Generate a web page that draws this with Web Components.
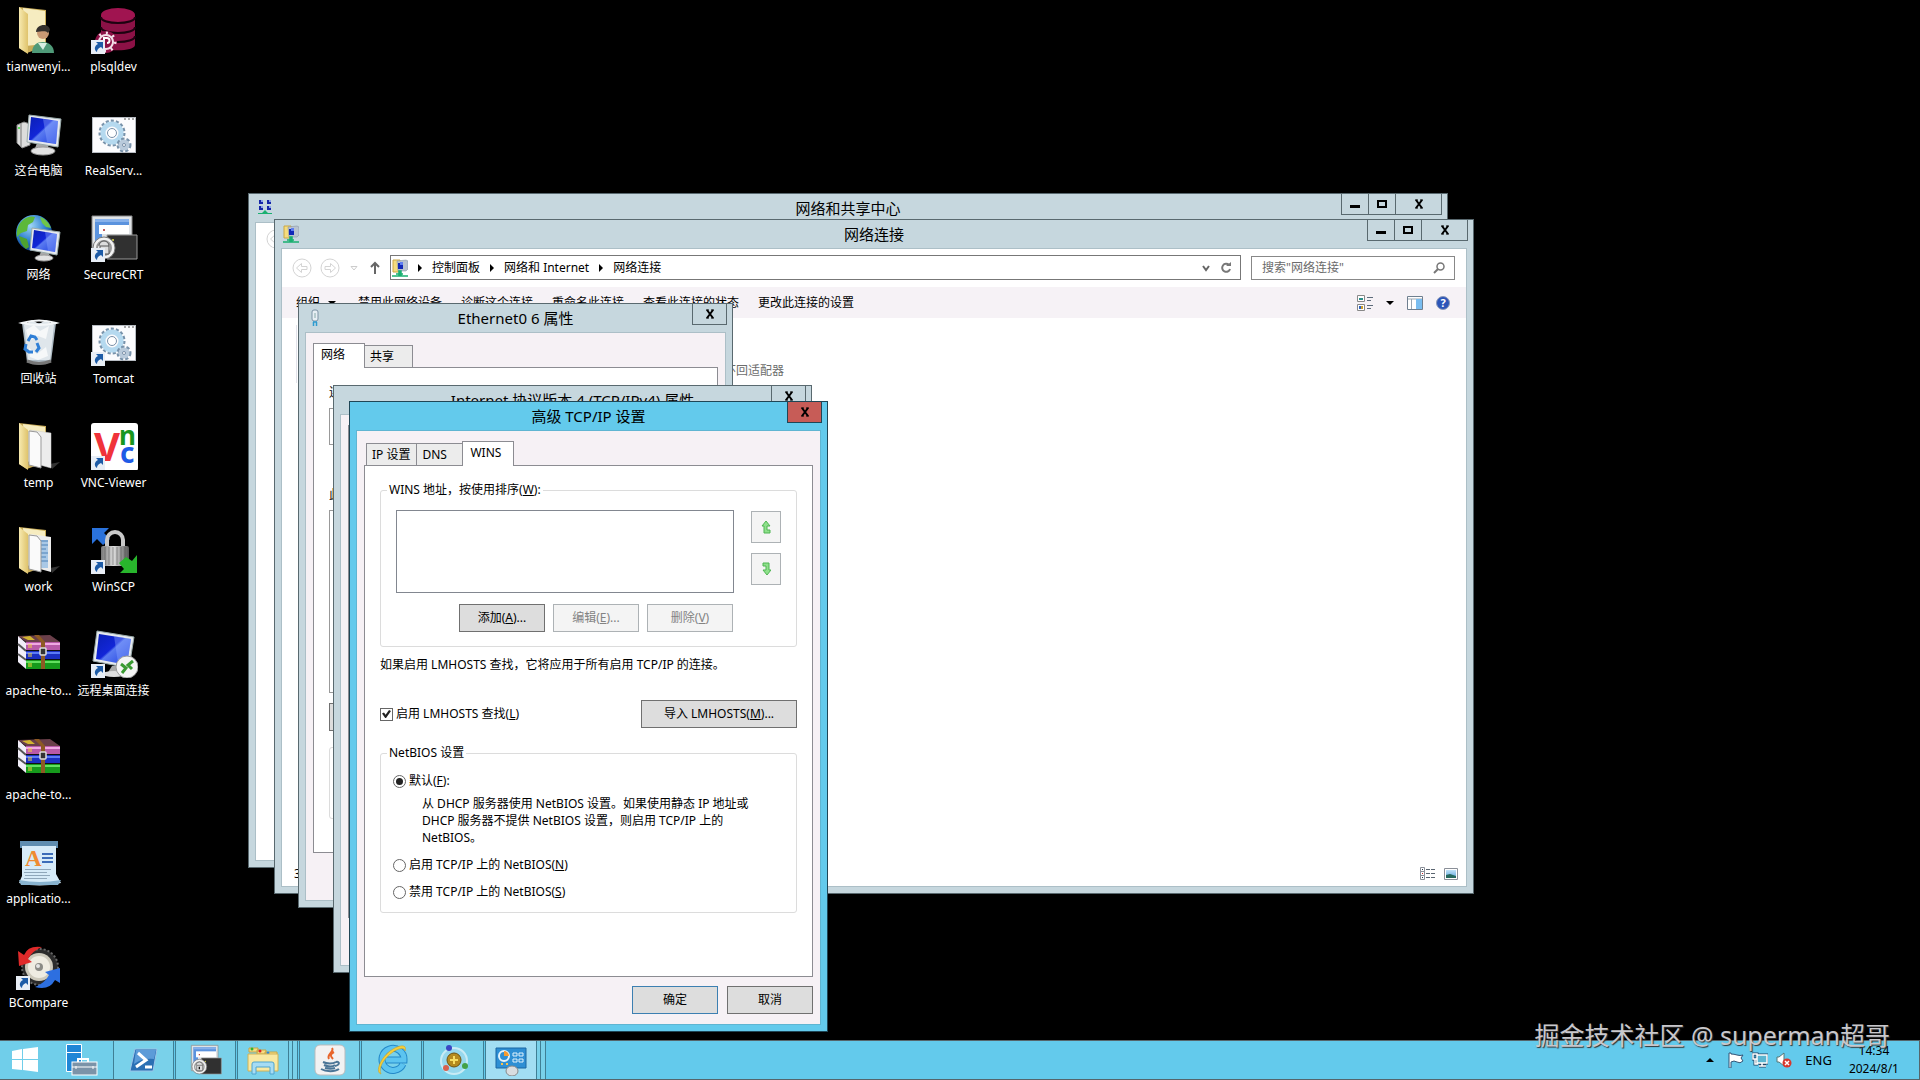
<!DOCTYPE html>
<html lang="zh-CN">
<head>
<meta charset="utf-8">
<title>网络连接</title>
<style>
  html, body { height: 100%; }
  body {
    margin: 0;
    overflow: hidden;
    background: #000;
    color: #000;
    font: 12px/16px "Noto Sans", "Noto Sans CJK SC", sans-serif;
  }
  desk-top { height: 100%; }

  /* windows sit freely on the desktop */
  #sharing { left: 248px; top: 193px; width: 1200px; height: 675px; }
  #connections { left: 274px; top: 219px; width: 1200px; height: 675px; }
  #ethernet { left: 298px; top: 303px; width: 435px; height: 605px; }
  #ipv4 { left: 333px; top: 385px; width: 479px; height: 588px; }
  #advanced { left: 349px; top: 401px; width: 479px; height: 631px; }
</style>
</head>
<body>
<desk-top>
  <desk-icon slot="icons" icon="user" label="tianwenyi..."></desk-icon>
  <desk-icon slot="icons" icon="computer" label="这台电脑"></desk-icon>
  <desk-icon slot="icons" icon="network" label="网络"></desk-icon>
  <desk-icon slot="icons" icon="bin" label="回收站"></desk-icon>
  <desk-icon slot="icons" icon="folder" label="temp"></desk-icon>
  <desk-icon slot="icons" icon="folderdoc" label="work"></desk-icon>
  <desk-icon slot="icons" icon="rar" label="apache-to..."></desk-icon>
  <desk-icon slot="icons" icon="rar" label="apache-to..."></desk-icon>
  <desk-icon slot="icons" icon="wordpad" label="applicatio..."></desk-icon>
  <desk-icon slot="icons" icon="bcompare" label="BCompare" shortcut></desk-icon>
  <desk-icon slot="icons" icon="database" label="plsqldev" shortcut></desk-icon>
  <desk-icon slot="icons" icon="gears" label="RealServ..."></desk-icon>
  <desk-icon slot="icons" icon="securecrt" label="SecureCRT" shortcut></desk-icon>
  <desk-icon slot="icons" icon="gears" label="Tomcat" shortcut></desk-icon>
  <desk-icon slot="icons" icon="vnc" label="VNC-Viewer" shortcut></desk-icon>
  <desk-icon slot="icons" icon="winscp" label="WinSCP" shortcut></desk-icon>
  <desk-icon slot="icons" icon="remote" label="远程桌面连接" shortcut></desk-icon>

  <app-window id="sharing" heading="网络和共享中心" icon="sharing" controls="full">
    <explorer-view bare></explorer-view>
  </app-window>

  <app-window id="connections" heading="网络连接" icon="connections" controls="full">
    <explorer-view></explorer-view>
  </app-window>

  <app-window id="ethernet" heading="Ethernet0 6 属性" icon="adapter" tone="dialog">
    <tab-pages tabs="网络,共享" active="0">
      <adapter-page></adapter-page>
    </tab-pages>
  </app-window>

  <app-window id="ipv4" heading="Internet 协议版本 4 (TCP/IPv4) 属性" tone="dialog">
    <tab-pages tabs="" active="0"></tab-pages>
  </app-window>

  <app-window id="advanced" heading="高级 TCP/IP 设置" tone="dialog" active>
    <tab-pages tabs="IP 设置,DNS,WINS" active="2">
      <wins-page></wins-page>
      <push-button slot="footer" primary>确定</push-button>
      <push-button slot="footer">取消</push-button>
    </tab-pages>
  </app-window>

  <task-bar slot="taskbar">
    <task-button icon="powershell" label="PowerShell"></task-button>
    <task-button icon="securecrt" label="SecureCRT"></task-button>
    <task-button icon="explorer" label="文件资源管理器" stacked></task-button>
    <task-button icon="java" label="Java"></task-button>
    <task-button icon="ie" label="Internet Explorer"></task-button>
    <task-button icon="molecule" label="Tools"></task-button>
    <task-button icon="panel" label="控制面板" active></task-button>
  </task-bar>
</desk-top>

<script>
const DEFS = `
<defs>
  <linearGradient id="screen" x1="0" y1="0" x2="1" y2="1">
    <stop offset="0" stop-color="#0a1fb4"/><stop offset=".45" stop-color="#1226d8"/>
    <stop offset=".5" stop-color="#5a7bf0"/><stop offset="1" stop-color="#1b3ce0"/>
  </linearGradient>
  <linearGradient id="paper" x1="0" y1="0" x2="1" y2="0">
    <stop offset="0" stop-color="#f7eab0"/><stop offset="1" stop-color="#dfc36c"/>
  </linearGradient>
  <linearGradient id="steel" x1="0" y1="0" x2="1" y2="0">
    <stop offset="0" stop-color="#777"/><stop offset=".45" stop-color="#ddd"/><stop offset="1" stop-color="#555"/>
  </linearGradient>
  <radialGradient id="globe" cx=".4" cy=".3" r=".7">
    <stop offset="0" stop-color="#9fd6f7"/><stop offset=".6" stop-color="#2f80cf"/><stop offset="1" stop-color="#0e3f8c"/>
  </radialGradient>
  <linearGradient id="sky" x1="0" y1="0" x2="0" y2="1">
    <stop offset="0" stop-color="#bfe3fa"/><stop offset="1" stop-color="#5fa5dc"/>
  </linearGradient>
</defs>`;

const FOLDER = `
  <path d="M4 1L31 4V40L12 47L4 42Z" fill="#c9ac58"/>
  <path d="M8 2L30 5V38L10 40Z" fill="#f6ecc0"/>
  <path d="M4 1L13 8V48L4 42Z" fill="url(#paper)"/>`;

const CRT = `
  <path d="M2 2H42V40H2Z" fill="#dfe3e6" stroke="#888"/>
  <path d="M5 5H39V12H12V30H5Z" fill="#5b93de"/>
  <path d="M9 11H39V20H9Z" fill="#fff"/><path d="M5 5H39V8H5Z" fill="#87b1ea"/>
  <circle cx="14" cy="16" r="1" fill="#a22"/>
  <path d="M17 21H47V45H17Z" fill="#303030" stroke="#999"/>
  <circle cx="23" cy="26" r="1" fill="#e5e24a"/>
  <circle cx="14" cy="34" r="11" fill="#f2f2f2" stroke="#777"/>
  <circle cx="14" cy="34" r="7" fill="none" stroke="#999" stroke-width="2"/>
  <path d="M9 32a5 5 0 0 1 10 0M10 32h9v8h-9z" fill="#ddd" stroke="#555"/>
  <path d="M14 34v4" stroke="#111" stroke-width="2"/>`;

// toothed wheel built from a dashed ring
const cog = (x, y, r, fill) => `
  <circle cx="${x}" cy="${y}" r="${r + 1}" fill="none" stroke="#7892aa" stroke-width="3" stroke-dasharray="3 2"/>
  <circle cx="${x}" cy="${y}" r="${r - 2}" fill="none" stroke="${fill}" stroke-width="5"/>
  <circle cx="${x}" cy="${y}" r="${r / 2 - 1}" fill="#fff" stroke="#7a90a8"/>`;

const NET_FOLDER = `
  <path d="M1 1h7v12H1z" fill="#f5dc7d" stroke="#c9a646"/>
  <path d="M5 2l9-1 2 1v8l-2 2H6z" fill="#b9c3cf" stroke="#7f8b98" stroke-width=".5"/>
  <path d="M6 4h5v6H6z" fill="#1028b8"/><path d="M8 3h3v3H8z" fill="#5f7ef0"/>
  <path d="M0 17h16M4 15h7M7 12h2v4H7z" stroke="#19b070" stroke-width="1.5" fill="#19b070"/>`;

const ICONS = {
  user: ["0 0 48 48", `${FOLDER}
    <path d="M17 47c0-8 5-11 11-11s11 4 11 11z" fill="#4f9a78"/><path d="M23 37l5 7 4-7" fill="#d8eee2"/>
    <circle cx="28" cy="27" r="6" fill="#c99a74"/><path d="M21 26c0-8 13-10 14-2l-2 3c-3-3-7-1-12-1z" fill="#33302c"/>`],
  computer: ["0 0 48 48", `
    <path d="M2 15L9 12L15 14V35L7 38L2 33Z" fill="#dcdcdc" stroke="#888"/><path d="M6 14V37" stroke="#777"/>
    <circle cx="4" cy="18" r="1" fill="#3d3"/>
    <path d="M22 33h10l3 8H19z" fill="#aaa"/><ellipse cx="28" cy="41" rx="12" ry="4" fill="#e2e2e2" stroke="#999"/>
    <path d="M14 5L46 9L43 37L12 32Z" fill="#e6e9ee" stroke="#9aa"/><path d="M16 7L43 11L41 34L14 30Z" fill="url(#screen)"/>
    <path d="M28 9L43 11L41 34L32 32Z" fill="#8eaaff" opacity=".4"/>`],
  network: ["0 0 48 48", `
    <circle cx="19" cy="19" r="18" fill="url(#globe)"/>
    <path d="M7 7c5-5 10-5 13-4l-2 5-5 3-1 6-6 2-4 4c-1-6 1-12 5-16z" fill="#5cb83a"/>
    <path d="M25 3c6 2 9 6 11 11l-5-1-4-4z" fill="#6fc546"/><path d="M4 22l8 3 2 8-3 2c-4-3-6-8-7-13z" fill="#4da22f"/>
    <path d="M26 38h7l3 6H23z" fill="#aaa"/><ellipse cx="29" cy="44" rx="9" ry="3" fill="#e2e2e2" stroke="#999"/>
    <path d="M17 14L45 18L42 41L15 36Z" fill="#e6e9ee" stroke="#9aa"/><path d="M19 16L42 20L40 38L17 34Z" fill="url(#screen)"/>
    <path d="M30 18L42 20L40 38L33 37Z" fill="#8eaaff" opacity=".4"/>`],
  bin: ["0 0 48 48", `
    <path d="M7 5L41 5L36 44Q24 49 12 44Z" fill="#aebbc4"/><path d="M9 7L17 2L24 6L31 2L39 7L35 42L13 42Z" fill="#dfe6eb"/>
    <path d="M11 12l8-5 6 6 9-5-3 13-8-3-9 5zM14 30l8 6 9-7 2 9-10 4-8-3z" fill="#fff" opacity=".7"/>
    <path d="M7 5Q24 0 41 5Q24 9 7 5Z" fill="none" stroke="#f3f6f8" stroke-width="2"/>
    <path d="M13 23l3-5 4 1 2 3M11 26l-1 5 4 3 4 0M22 25l2 5-3 4" fill="none" stroke="#2f7fd6" stroke-width="3"/>
    <path d="M12 43Q24 48 36 43" fill="none" stroke="#777" stroke-width="3"/>`],
  folder: ["0 0 48 48", `<path d="M35 42l10-2-8 7z" fill="#333"/>${FOLDER}
    <path d="M15 8L36 11V46L25 43V14Z" fill="#ececec" stroke="#ccc" stroke-width=".5"/>
    <path d="M14 9L22 10L26 15V46L14 43Z" fill="#fafafa" stroke="#999"/>`],
  folderdoc: ["0 0 48 48", `<path d="M35 42l10-2-8 7z" fill="#333"/>${FOLDER}
    <path d="M15 8L36 11V46L25 43V14Z" fill="#ececec"/>
    <path d="M26 14h7v28h-7z" fill="#a9c8e6"/><path d="M26 15h7M26 19h7M26 23h5M26 27h7M26 31h5M26 35h7" stroke="#4c82b8"/>
    <path d="M14 9L22 10L26 15V46L14 43Z" fill="#fafafa" stroke="#999"/>`],
  rar: ["0 0 48 48", `
    <path d="M3 6L35 5L45 12H11Z" fill="#6a3f4a"/><path d="M7 7L15 6L20 10H13Z" fill="#d2b431"/>
    <path d="M3 6L11 13V39L3 32Z" fill="#f1eef8"/><path d="M3 14L11 21M3 24L11 30" stroke="#555" stroke-width="2"/>
    <path d="M11 12H45V20H11Z" fill="#b95aa8"/><path d="M11 13H45V15H11Z" fill="#f0a8e2"/>
    <path d="M11 21H45V29H11Z" fill="#1b2fc0"/><path d="M11 22H45V24H11Z" fill="#5c7bf5"/>
    <path d="M11 30H45V39H11Z" fill="#169a1c"/><path d="M11 31H45V33H11Z" fill="#62e060"/>
    <path d="M11 20.5H45M11 29.5H45" stroke="#111"/>
    <path d="M14 14v4M16 14v4M14 23v4M16 23v4M14 33v4M16 33v4" stroke="#f4d53a"/>
    <path d="M19 5L26 12V39H30V12L24 5Z" fill="#8d5a24"/>
    <rect x="25" y="18" width="6" height="7" rx="1" fill="#333" stroke="#ddd" stroke-width="1.5"/>`],
  wordpad: ["0 0 48 48", `
    <path d="M5 3H43V10H5Z" fill="#5f8db0"/><path d="M7 8H41V36L46 45Q24 50 4 45L7 38Z" fill="#d6ebf8"/>
    <path d="M4 42Q24 46 46 42L43 47H6Z" fill="#88b3cf"/>
    <text x="10" y="28" font-family="Liberation Serif" font-weight="bold" font-size="23" fill="#ef8b32">A</text>
    <path d="M27 16H38M27 20H38M27 24H38" stroke="#3b6cb8" stroke-width="2"/>
    <path d="M10 31.5H36M9 34.5H32M10 37.5H35M9 40.5H32" stroke="#8fa7ba"/>`],
  bcompare: ["0 0 48 48", `
    <circle cx="25" cy="25" r="18" fill="#2b2b2b" stroke="#666" stroke-width="2" stroke-dasharray="2 2"/>
    <circle cx="24" cy="25" r="14" fill="#cdc9bb"/><circle cx="24" cy="25" r="11" fill="#efece2"/>
    <circle cx="24" cy="25" r="4" fill="#8b8b86"/><circle cx="23" cy="24" r="2" fill="#e5e5e5"/>
    <path d="M27 5Q13 3 9 13L3 9L4 24L17 20L13 17Q17 9 27 5Z" fill="#e02a2a"/>
    <path d="M20 45Q34 49 40 38L45 41V26L30 30L34 33Q30 41 20 45Z" fill="#2d6fe0"/>`],
  database: ["0 0 48 48", `
    <path d="M11 9V39C11 46 45 46 45 39V9Z" fill="#8c1146"/><ellipse cx="28" cy="9" rx="17" ry="7" fill="#a01450"/>
    <path d="M11 11c0 8 34 8 34 0M11 21c0 8 34 8 34 0M11 30c0 8 34 8 34 0" fill="none" stroke="#1d0210" stroke-width="2"/>
    <circle cx="16" cy="36" r="11" fill="#8c1146"/>
    <circle cx="16" cy="36" r="9" fill="none" stroke="#f3dfe8" stroke-width="3" stroke-dasharray="2 5"/>
    <circle cx="16" cy="36" r="7" fill="none" stroke="#f3dfe8" stroke-width="2"/>
    <path d="M14 40v-8h3a2 2 0 0 1 0 5" fill="none" stroke="#fff" stroke-width="2"/>`],
  gears: ["0 0 48 48", `
    <rect x="2.5" y="7.5" width="43" height="35" fill="#fbfbfd" stroke="#b7bcc2"/>
    <path d="M34 9h2M38 9h2M42 9h2" stroke="#555"/>${cog(22, 23, 11, "#b5d9ef")}${cog(34, 35, 5, "#b9cadb")}`],
  securecrt: ["0 0 48 48", CRT],
  vnc: ["0 0 48 48", `
    <rect x="1" y="1" width="47" height="48" rx="3" fill="#fff"/>
    <g font-family="Noto Sans" font-weight="bold"><text x="4" y="39" font-size="40" fill="#f0333a">V</text>
    <text x="29" y="23" font-size="26" fill="#18961e">n</text><text x="30" y="41" font-size="28" fill="#1f5be6">c</text></g>`],
  winscp: ["0 0 48 48", `
    <path d="M2 2H19L14 7L20 13L13 19L7 13L2 18Z" fill="#2a72dc"/>
    <path d="M17 22V14a8 8 0 0 1 16 0v8" fill="none" stroke="#c9c9c9" stroke-width="4"/>
    <rect x="11" y="20" width="28" height="20" rx="2" fill="url(#steel)"/>
    <path d="M15 21v18M19 21v18M23 21v18M27 21v18M31 21v18M35 21v18" stroke="#444" opacity=".5"/>
    <path d="M47 29V47H30L34 43L29 37L36 31L42 35Z" fill="#28b52c"/>`],
  remote: ["0 0 48 48", `
    <path d="M22 36h9l3 8H17z" fill="#aaa"/><ellipse cx="24" cy="44" rx="12" ry="3" fill="#ddd"/>
    <path d="M7 1L44 7L39 38L3 31Z" fill="#e6e9ee" stroke="#9aa"/><path d="M9 4L41 9L37 35L6 29Z" fill="url(#screen)"/>
    <path d="M24 6L41 9L37 35L28 33Z" fill="#8eaaff" opacity=".4"/>
    <circle cx="37" cy="37" r="11" fill="#f4f4f4" stroke="#999"/>
    <path d="M31 34l5 4-4 5M43 31l-5 4 4 4" fill="none" stroke="#3a9a32" stroke-width="3"/>`],
  shortcut: ["0 0 14 14", `<path d="M0 0h14v14H0z" fill="#e8eef6"/>
    <path d="M12 2v7L10 7C7 8 6 10 6 12C3 10 3 6 7 4L5 2Z" fill="#1d5ba6"/>`],

  sharing: ["0 0 16 16", `<path d="M2 1h4v4H2zM10 1h4v4h-4zM2 7h4v4H2zM10 7h4v4h-4z" fill="#1526a8"/>
    <path d="M4 1h2v2H4zM12 1h2v2h-2zM4 7h2v2H4zM12 7h2v2h-2z" fill="#8ba2e8"/>
    <path d="M8 11l3 3h4v1H1v-1h4z" fill="#19b070"/>`],
  connections: ["0 0 16 18", NET_FOLDER],
  adapter: ["0 0 16 18", `<rect x="5" y="1" width="6" height="11" rx="2" fill="#e7eef4" stroke="#7d93a5"/>
    <path d="M8 4v5" stroke="#8aa"/><path d="M6 13h4M6.5 13v4M9.5 13v4" stroke="#2e9bd0" stroke-width="1.5"/>`],
  back: ["0 0 20 20", `<g fill="none" stroke="#d4d4d4"><circle cx="10" cy="10" r="9"/><path d="M4.5 10l5-4.500v3h5.500v3h-5.500v3z"/></g>`],
  forward: ["0 0 20 20", `<g fill="none" stroke="#d4d4d4"><circle cx="10" cy="10" r="9"/><path d="M15.5 10l-5-4.500v3h-5.500v3h5.500v3z"/></g>`],
  recent: ["0 0 12 20", `<path d="M3 8.500h6L6 12z" fill="none" stroke="#ccc"/>`],
  up: ["0 0 14 20", `<path d="M7 16V5M3 9l4-4 4 4" fill="none" stroke="#666" stroke-width="2"/>`],
  crumb: ["0 0 6 10", `<path d="M1 1l4 4-4 4z"/>`],
  caret: ["0 0 8 6", `<path d="M0 1h8L4 5z"/>`],
  chevron: ["0 0 10 10", `<path d="M2 3l3 4 3-4" fill="none" stroke="#666" stroke-width="2"/>`],
  refresh: ["0 0 12 12", `<path d="M9 3a4 4 0 1 0 1 4" fill="none" stroke="#777" stroke-width="2"/><path d="M6 4h5V0z" fill="#777"/>`],
  search: ["0 0 12 12", `<circle cx="7.5" cy="4.5" r="3.5" fill="none" stroke="#777" stroke-width="1.5"/><path d="M5 7L1 11" stroke="#777" stroke-width="2"/>`],
  views: ["0 0 16 16", `<path d="M.5.5h7v6h-7zM.5 9.500h7v6h-7z" fill="#fff" stroke="#888"/>
    <path d="M2 3h4v2H2z" fill="#2b8f8a"/><path d="M2 11h2v3H2z" fill="#2f62c0"/><path d="M4 11h2v3H4z" fill="#d0a026"/>
    <path d="M10 2.500h6M10 5.500h4M10 10.500h6M10 13.500h4" stroke="#5d6b7a"/>`],
  pane: ["0 0 16 16", `<path d="M.5 1.500h15v13H.5z" fill="#fff" stroke="#6f7f8f"/><path d="M1 4h14M4.500 4v10" stroke="#9aa7b3"/><path d="M9 4h6v10H9z" fill="#79bdf0"/>`],
  help: ["0 0 14 14", `<circle cx="7" cy="7" r="6.5" fill="#2c55b8" stroke="#8a99b8"/>
    <text x="7" y="11" text-anchor="middle" font-family="Noto Sans" font-weight="bold" font-size="11" fill="#fff">?</text>`],
  details: ["0 0 16 14", `<path d="M.5.5h4v4h-4zM.5 4.500h4v4h-4zM.5 8.500h4v4h-4z" fill="#fff" stroke="#8a8f98"/>
    <path d="M2 2.500h1M2 10.500h1" stroke="#234"/><path d="M2 6.500h1" stroke="#c22"/>
    <path d="M6 2.500h4M11 2.500h4M6 6.500h4M11 6.500h4M6 10.500h4M11 10.500h4" stroke="#5a6570"/>`],
  thumbs: ["0 0 14 12", `<path d="M.5.5h13v11H.5z" fill="#fff" stroke="#8a8f98"/><path d="M2 2h10v8H2z" fill="url(#sky)"/><path d="M2 7l4-1 6 2v2H2z" fill="#25695e"/>`],
  minimize: ["0 0 12 12", `<path d="M1 7h10v3H1z"/>`],
  maximize: ["0 0 12 12", `<path d="M2 3h8v6H2z" fill="none" stroke="#000" stroke-width="2"/>`],
  close: ["0 0 12 12", `<path d="M2 2h3M7 2h3M2 10h3M7 10h3" stroke="#000"/><path d="M3 2l6 8M9 2L3 10" stroke="#000" stroke-width="2"/>`],
  raise: ["0 0 10 14", `<path d="M5 1L9 6H6V10H9V13H3V6H1Z" fill="#8fe08b" stroke="#4fb552"/>`],
  lower: ["0 0 10 14", `<path d="M6 13L2 8H5V4H2V1H8V8H10Z" fill="#8fe08b" stroke="#4fb552"/>`],

  start: ["0 0 28 28", `<path d="M1 5L11 3V13H1ZM12 3L27 1V13H12ZM1 14H11V24L1 23ZM12 14H27V26L12 24Z" fill="#fff"/>`],
  server: ["0 0 32 32", `<path d="M.5.5h15v8h-15zM.5 8.500h15v19h-15z" fill="#1f86d6" stroke="#fff"/>
    <path d="M12 18v-3h10v3" fill="none" stroke="#fff" stroke-width="2"/>
    <rect x="6" y="18" width="25" height="13" fill="#7b93a8" stroke="#fff"/><path d="M6 23h25M10 22v3M27 22v3" stroke="#fff"/>`],
  powershell: ["0 0 32 32", `<path d="M7 5H29L25 27H2Z" fill="#2b70b4" stroke="#9bc4e8"/><path d="M8 6H28L26 15Q14 14 6 20Z" fill="#5c9bd8"/>
    <path d="M10 9l8 7-10 7M17 23h7" fill="none" stroke="#fff" stroke-width="3"/>`],
  explorer: ["0 0 32 32", `<path d="M2 4h9v4H2zM10 6h9v4h-9zM18 8h12v4H18z" fill="#f5dc83" stroke="#c7a545"/>
    <circle cx="5" cy="5" r="1.5" fill="#2fb52f"/><circle cx="13" cy="7" r="1.5" fill="#d22"/><circle cx="21" cy="9" r="1.5" fill="#2a86d8"/>
    <path d="M1 10H31V27H1Z" fill="#f9e9a2" stroke="#d0b257"/>
    <path d="M5 30V20Q5 18 7 18H25Q27 18 27 20V30H23V23H9V30Z" fill="#a6dcf4" stroke="#4fa5cf"/>`],
  java: ["0 0 32 32", `<rect x="1" y="1" width="30" height="30" rx="5" fill="#f2f2f2" stroke="#bbb"/>
    <path d="M18 4c3 4-6 6-3 11M20 8c-4 2-4 4-1 7" fill="none" stroke="#e8652a" stroke-width="2"/>
    <path d="M9 18c4 2 10 2 13 0M10 21c4 2 9 2 11 0M22 18c4-1 4 3-1 4M7 25c5 3 14 3 18 0M11 24c4 1 7 1 10 0" fill="none" stroke="#4b7596" stroke-width="2"/>`],
  ie: ["0 0 32 32", `<path d="M27 20A11 11 0 1 1 28 16H10" fill="none" stroke="#2489c9" stroke-width="7"/>
    <path d="M27 20A11 11 0 1 1 28 16H10" fill="none" stroke="#5cc4f0" stroke-width="5"/>
    <path d="M5 30C-2 28 6 11 17 5C26 0 31 1 29 7C29 3 23 4 17 8C8 14 2 24 5 30Z" fill="#f4cf3b" stroke="#c99b1e" stroke-width=".5"/>`],
  molecule: ["0 0 32 32", `<circle cx="16" cy="17" r="13" fill="#a5dcef" opacity=".7" stroke="#eaf7fb" stroke-width="2"/>
    <circle cx="16" cy="16" r="7" fill="#b58a1e" stroke="#6e5310"/><path d="M16 12v8M12 16h8" stroke="#f7dd62" stroke-width="2"/>
    <circle cx="11" cy="4" r="3" fill="#3a48c4"/><circle cx="8" cy="24" r="3" fill="#d8604e"/><circle cx="27" cy="22" r="3" fill="#43a147"/>`],
  panel: ["0 0 32 32", `<path d="M1 4H31V24H1Z" fill="#2e8fd4" stroke="#1b66a2"/>
    <circle cx="9" cy="12" r="5" fill="none" stroke="#e3f3fc" stroke-width="2"/><path d="M9 7a5 5 0 0 1 5 5H9z" fill="#f49b31"/>
    <path d="M18 9h4v3h-4zM24 9h4v3h-4zM18 15h4v3h-4zM24 15h4v3h-4z" fill="none" stroke="#dff2fc"/>
    <path d="M6 20h2M11 20h2" stroke="#f7c04b" stroke-width="2"/>
    <ellipse cx="17" cy="27" rx="6" ry="5" fill="#d9dde0" stroke="#888"/>`],

  trayup: ["0 0 8 6", `<path d="M0 5h8L4 1z"/>`],
  flag: ["0 0 16 16", `<path d="M1 1V16H3V10Q6 8 9 10T15 9L13 6L15 3Q12 4 9 3T3 2V1Z" fill="#fff" stroke="#357"/>`],
  wired: ["0 0 16 16", `<path d="M5 3H15V11H5ZM7 14H14M10 11V14M1 2H5V7H1ZM3 7V12H6" fill="none" stroke="#246" stroke-width="3"/>
    <path d="M5 3H15V11H5Z" fill="#5bb5d0"/>
    <path d="M5 3H15V11H5ZM7 14H14M10 11V14M1 2H5V7H1ZM3 7V12H6" fill="none" stroke="#fff" stroke-width="1.5"/>`],
  muted: ["0 0 16 16", `<path d="M1 5H3L8 1V14L3 10H1Z" fill="#fff" stroke="#577"/><circle cx="11" cy="11" r="4.5" fill="#d8362c"/><path d="M9 9l4 4M13 9l-4 4" stroke="#fff" stroke-width="1.5"/>`],
};

class UiIcon extends HTMLElement {
  constructor() {
    super();
    this.attachShadow({ mode: "open" });
  }

  connectedCallback() {
    const [box, shapes] = ICONS[this.getAttribute("name")];
    const size = box.split(" ");
    const width = this.getAttribute("size") || size[2];
    const height = this.getAttribute("size") || size[3];
    this.shadowRoot.innerHTML = `
      <style>
        :host { display: block; flex: none; }
        svg { display: block; }
      </style>
      <svg viewBox="${box}" width="${width}" height="${height}" aria-hidden="true">${DEFS}${shapes}</svg>
    `;
  }
}

class DeskTop extends HTMLElement {
  constructor() {
    super();
    this.attachShadow({ mode: "open" });
    this.shadowRoot.innerHTML = `
      <style>
        :host { display: flex; flex-direction: column; position: relative; overflow: hidden; }
        .icons {
          flex: 1;
          min-height: 0;
          display: grid;
          grid-auto-flow: column;
          grid-template-rows: repeat(auto-fill, 104px);
          grid-auto-columns: 75px;
          padding-left: 1px;
        }
        .mark {
          position: absolute;
          right: 30px;
          bottom: 27px;
          color: #c9c8cc;
          font-size: 25px;
          line-height: 36px;
          text-shadow: 1px 1px 1px #333;
          pointer-events: none;
          white-space: nowrap;
        }
      </style>
      <div class="icons"><slot name="icons"></slot></div>
      <slot></slot>
      <slot name="taskbar"></slot>
      <div class="mark">掘金技术社区 @ superman超哥</div>
    `;
  }
}

class DeskIcon extends HTMLElement {
  constructor() {
    super();
    this.attachShadow({ mode: "open" });
  }

  connectedCallback() {
    this.shadowRoot.innerHTML = `
      <style>
        :host { display: block; color: #fff; }
        a {
          display: flex;
          flex-direction: column;
          align-items: center;
          gap: 5px;
          padding-top: 6px;
          color: inherit;
          text-decoration: none;
          white-space: nowrap;
        }
        .art { position: relative; }
        .badge { position: absolute; left: 1px; bottom: 0; }
      </style>
      <a href="#">
        <span class="art">
          <ui-icon name="${this.getAttribute("icon")}"></ui-icon>
          ${this.hasAttribute("shortcut") ? `<ui-icon class="badge" name="shortcut"></ui-icon>` : ""}
        </span>
        <span>${this.getAttribute("label")}</span>
      </a>
    `;
  }
}

class AppWindow extends HTMLElement {
  constructor() {
    super();
    this.attachShadow({ mode: "open" });
  }

  connectedCallback() {
    const icon = this.getAttribute("icon");
    const full = this.getAttribute("controls") === "full";
    this.shadowRoot.innerHTML = `
      <style>
        :host {
          --frame: #c6d7de;
          --line: #59696f;
          --client: #fff;
          position: absolute;
          isolation: isolate;
          box-sizing: border-box;
          display: flex;
          flex-direction: column;
          padding: 0 7px 7px;
          border: 1px solid var(--line);
          background: var(--frame);
        }
        :host([tone="dialog"]) { --client: #f6f1f5; }
        :host([active]) { --frame: #63caec; --line: #1f4656; }
        header { position: relative; height: 29px; display: flex; justify-content: center; flex: none; }
        h1 { margin: 0; font-size: 15px; font-weight: normal; line-height: 28px; white-space: nowrap; }
        .icon { position: absolute; left: 1px; top: 5px; }
        .controls { position: absolute; right: -2px; top: -1px; display: flex; }
        button {
          display: grid;
          place-items: center;
          box-sizing: border-box;
          width: 28px;
          height: 22px;
          margin: 0 0 0 -1px;
          padding: 0;
          border: 1px solid var(--line);
          background: none;
        }
        .close { width: 35px; }
        .full .close { width: 47px; }
        :host([active]) .close { background: #c75c57; }
        .client {
          flex: 1;
          min-height: 0;
          display: flex;
          flex-direction: column;
          background: var(--client);
          box-shadow: 0 0 0 1px rgba(80, 110, 120, .22);
        }
        ::slotted(*) { flex: 1; min-height: 0; }
      </style>
      <header>
        ${icon ? `<ui-icon class="icon" name="${icon}"></ui-icon>` : ""}
        <h1>${this.getAttribute("heading")}</h1>
        <div class="controls ${full ? "full" : ""}">
          ${full ? `
          <button aria-label="最小化"><ui-icon name="minimize"></ui-icon></button>
          <button aria-label="最大化"><ui-icon name="maximize"></ui-icon></button>` : ""}
          <button class="close" aria-label="关闭"><ui-icon name="close"></ui-icon></button>
        </div>
      </header>
      <div class="client"><slot></slot></div>
    `;
  }
}

class ExplorerView extends HTMLElement {
  constructor() {
    super();
    this.attachShadow({ mode: "open" });
  }

  connectedCallback() {
    const style = `
      <style>
        :host { display: flex; flex-direction: column; }
        button { padding: 0; border: 0; background: none; font: inherit; color: inherit; white-space: nowrap; }
        nav { display: flex; align-items: center; gap: 8px; padding: 6px 11px 7px 10px; }
        .address {
          flex: 1;
          display: flex;
          align-items: center;
          gap: 9px;
          height: 23px;
          margin-right: 2px;
          padding: 0 8px 0 1px;
          border: 1px solid #777;
          white-space: nowrap;
        }
        .address a { color: inherit; text-decoration: none; }
        .space { flex: 1; }
        .search { display: flex; align-items: center; width: 202px; height: 22px; border: 1px solid #888; }
        .search ui-icon { padding-right: 9px; }
        input {
          flex: 1;
          min-width: 0;
          padding: 0 0 0 10px;
          border: 0;
          outline: 0;
          background: none;
          font: inherit;
        }
        input::placeholder { color: #6b6b6b; opacity: 1; }
        .commands {
          display: flex;
          align-items: center;
          gap: 19px;
          height: 31px;
          padding: 0 16px 0 14px;
          background: #f6f2f6;
        }
        .menu { display: flex; align-items: center; gap: 8px; padding-right: 3px; }
        .tools { display: flex; align-items: center; gap: 13px; margin-left: auto; }
        .files { flex: 1; padding: 7px 14px; }
        .item {
          box-sizing: border-box;
          width: 488px;
          height: 58px;
          padding: 38px 0 0;
          border-left: 1px solid #e2e2ea;
          color: #6d6d6d;
          text-align: right;
        }
        footer { display: flex; align-items: center; justify-content: space-between; padding: 0 8px 4px 12px; }
        footer div { display: flex; gap: 8px; align-items: center; }
      </style>
    `;
    if (this.hasAttribute("bare")) {
      this.shadowRoot.innerHTML = `${style}
        <nav><button aria-label="后退"><ui-icon name="back"></ui-icon></button></nav>
      `;
      return;
    }
    this.shadowRoot.innerHTML = `${style}
      <nav>
        <button aria-label="后退"><ui-icon name="back"></ui-icon></button>
        <button aria-label="前进"><ui-icon name="forward"></ui-icon></button>
        <button aria-label="最近"><ui-icon name="recent"></ui-icon></button>
        <button aria-label="向上"><ui-icon name="up"></ui-icon></button>
        <div class="address">
          <ui-icon name="connections"></ui-icon>
          <ui-icon name="crumb"></ui-icon><a href="#">控制面板</a>
          <ui-icon name="crumb"></ui-icon><a href="#">网络和 Internet</a>
          <ui-icon name="crumb"></ui-icon><a href="#">网络连接</a>
          <span class="space"></span>
          <ui-icon name="chevron"></ui-icon>
          <ui-icon name="refresh"></ui-icon>
        </div>
        <div class="search">
          <input type="text" aria-label="搜索" placeholder='搜索"网络连接"'>
          <ui-icon name="search"></ui-icon>
        </div>
      </nav>
      <div class="commands">
        <button class="menu">组织 <ui-icon name="caret"></ui-icon></button>
        <button>禁用此网络设备</button>
        <button>诊断这个连接</button>
        <button>重命名此连接</button>
        <button>查看此连接的状态</button>
        <button>更改此连接的设置</button>
        <div class="tools">
          <ui-icon name="views"></ui-icon>
          <ui-icon name="caret"></ui-icon>
          <ui-icon name="pane"></ui-icon>
          <ui-icon name="help"></ui-icon>
        </div>
      </div>
      <div class="files"><div class="item">环回适配器</div></div>
      <footer>
        <span>3 个项目</span>
        <div><ui-icon name="details"></ui-icon><ui-icon name="thumbs"></ui-icon></div>
      </footer>
    `;
  }
}

class TabPages extends HTMLElement {
  constructor() {
    super();
    this.attachShadow({ mode: "open" });
  }

  connectedCallback() {
    const active = Number(this.getAttribute("active"));
    const names = this.getAttribute("tabs").split(",").filter(Boolean);
    const tabs = names.map((name, i) =>
      `<button role="tab" aria-selected="${i === active}">${name}</button>`
    ).join("");
    this.shadowRoot.innerHTML = `
      <style>
        :host { display: flex; flex-direction: column; padding: 10px 7px; }
        .tabs { display: flex; align-items: flex-end; padding-left: 2px; }
        button {
          height: 22px;
          min-width: 49px;
          margin-right: -1px;
          padding: 0 6px 0 5px;
          border: 1px solid #8c8c92;
          border-bottom: 0;
          background: #ececec;
          color: inherit;
          font: inherit;
          text-align: left;
          white-space: nowrap;
        }
        button[aria-selected="true"] {
          position: relative;
          z-index: 1;
          height: 25px;
          min-width: 52px;
          margin: 0 -1px -1px -2px;
          padding: 0 7px 3px;
          background: #fff;
        }
        .page {
          flex: 1;
          min-height: 0;
          display: flex;
          flex-direction: column;
          border: 1px solid #8c8c92;
          background: #fff;
        }
        .footer { display: flex; justify-content: flex-end; gap: 9px; min-height: 28px; padding-top: 9px; }
      </style>
      <div class="tabs" role="tablist">${tabs}</div>
      <div class="page"><slot></slot></div>
      <div class="footer"><slot name="footer"></slot></div>
    `;
  }
}

class PushButton extends HTMLElement {
  constructor() {
    super();
    this.attachShadow({ mode: "open" });
    this.shadowRoot.innerHTML = `
      <style>
        :host { display: block; flex: none; }
        button {
          display: grid;
          grid-auto-flow: column;
          place-content: center;
          box-sizing: border-box;
          min-width: 86px;
          height: 28px;
          padding: 0 10px;
          border: 1px solid #707070;
          background: #ddd;
          color: inherit;
          font: inherit;
          white-space: nowrap;
        }
        :host([square]) button { min-width: 30px; height: 32px; padding: 0; }
        :host([wide]) button { min-width: 156px; }
        :host([primary]) button { border-color: #3c7fb1; }
        button:disabled { border-color: #adb2b5; background: #f4f4f4; color: #838383; }
      </style>
      <button><span><slot></slot></span></button>
    `;
  }

  connectedCallback() {
    const button = this.shadowRoot.querySelector("button");
    button.disabled = this.hasAttribute("disabled");
    if (this.hasAttribute("label")) button.setAttribute("aria-label", this.getAttribute("label"));
  }
}

class GroupBox extends HTMLElement {
  constructor() {
    super();
    this.attachShadow({ mode: "open" });
    this.shadowRoot.innerHTML = `
      <style>
        :host { display: block; }
        fieldset {
          min-width: 0;
          margin: 0;
          padding: 12px 15px 14px;
          border: 1px solid #dcdcdc;
          border-radius: 3px;
        }
        legend { margin-left: -9px; padding: 0 2px; }
      </style>
      <fieldset>
        <legend><slot name="legend"></slot></legend>
        <slot></slot>
      </fieldset>
    `;
  }
}

class AdapterPage extends HTMLElement {
  constructor() {
    super();
    this.attachShadow({ mode: "open" });
    this.shadowRoot.innerHTML = `
      <style>
        :host { display: flex; flex-direction: column; padding: 17px 15px; }
        .box { border: 1px solid #999; }
        .adapter { height: 35px; margin: 7px 0 42px; }
        .items { height: 181px; margin: 7px 0 10px; }
        group-box { margin-top: 8px; }
        p { height: 37px; margin: 0; }
      </style>
      <span>连接时使用:</span>
      <div class="box adapter"></div>
      <span>此连接使用下列项目(<u>O</u>):</span>
      <div class="box items"></div>
      <push-button>安装(<u>N</u>)...</push-button>
      <group-box><span slot="legend">描述</span><p></p></group-box>
    `;
  }
}

class WinsPage extends HTMLElement {
  constructor() {
    super();
    this.attachShadow({ mode: "open" });
    this.shadowRoot.innerHTML = `
      <style>
        :host { display: block; padding: 16px 15px; }
        .order { display: flex; gap: 17px; }
        .list { flex: 1; height: 81px; border: 1px solid #828790; }
        .move { display: flex; flex-direction: column; gap: 10px; padding-top: 1px; }
        .actions { display: flex; justify-content: flex-end; gap: 8px; padding: 11px 48px 0 0; }
        p { margin: 0; }
        .note { margin-top: 10px; white-space: nowrap; }
        .lookup { display: flex; align-items: center; justify-content: space-between; margin: 27px 0 17px; }
        label { display: flex; align-items: center; gap: 3px; }
        input {
          appearance: none;
          flex: none;
          display: grid;
          place-items: center;
          box-sizing: border-box;
          width: 13px;
          height: 13px;
          margin: 0;
          border: 1px solid #666;
          background: #fff;
        }
        input[type="radio"] { border-radius: 50%; }
        input[type="radio"]:checked::before { content: ""; width: 7px; height: 7px; border-radius: 50%; background: #222; }
        input[type="checkbox"]:checked::before {
          content: "";
          width: 9px;
          height: 8px;
          background: #222;
          clip-path: polygon(0 45%, 22% 32%, 40% 60%, 78% 0, 100% 12%, 45% 100%, 35% 100%);
        }
        .modes { display: flex; flex-direction: column; gap: 11px; margin: 0 -3px -2px; }
        .modes p { margin: -5px -12px 0 29px; line-height: 17px; }
      </style>
      <group-box>
        <span slot="legend">WINS 地址，按使用排序(<u>W</u>):</span>
        <div class="order">
          <div class="list" role="listbox" aria-label="WINS 地址"></div>
          <div class="move">
            <push-button square disabled label="上移"><ui-icon name="raise"></ui-icon></push-button>
            <push-button square disabled label="下移"><ui-icon name="lower"></ui-icon></push-button>
          </div>
        </div>
        <div class="actions">
          <push-button>添加(<u>A</u>)...</push-button>
          <push-button disabled>编辑(<u>E</u>)...</push-button>
          <push-button disabled>删除(<u>V</u>)</push-button>
        </div>
      </group-box>
      <p class="note">如果启用 LMHOSTS 查找，它将应用于所有启用 TCP/IP 的连接。</p>
      <div class="lookup">
        <label><input type="checkbox" checked><span>启用 LMHOSTS 查找(<u>L</u>)</span></label>
        <push-button wide>导入 LMHOSTS(<u>M</u>)...</push-button>
      </div>
      <group-box>
        <span slot="legend">NetBIOS 设置</span>
        <div class="modes">
          <label><input type="radio" name="netbios" checked><span>默认(<u>F</u>):</span></label>
          <p>从 DHCP 服务器使用 NetBIOS 设置。如果使用静态 IP 地址或<br>DHCP 服务器不提供 NetBIOS 设置，则启用 TCP/IP 上的<br>NetBIOS。</p>
          <label><input type="radio" name="netbios"><span>启用 TCP/IP 上的 NetBIOS(<u>N</u>)</span></label>
          <label><input type="radio" name="netbios"><span>禁用 TCP/IP 上的 NetBIOS(<u>S</u>)</span></label>
        </div>
      </group-box>
    `;
  }
}

class TaskButton extends HTMLElement {
  constructor() {
    super();
    this.attachShadow({ mode: "open" });
  }

  connectedCallback() {
    this.shadowRoot.innerHTML = `
      <style>
        :host { display: flex; width: 61px; }
        button {
          flex: 1;
          display: grid;
          place-items: center;
          padding: 0;
          border: solid #3f7f95;
          border-width: 0 1px;
          background: #79d1ea;
        }
        :host([active]) button { background: #a2def3; }
        i { width: 3px; border-right: 1px solid #3f7f95; background: #79d1ea; }
        i + i { width: 4px; }
      </style>
      <button aria-label="${this.getAttribute("label")}"><ui-icon name="${this.getAttribute("icon")}" size="32"></ui-icon></button>
      ${this.hasAttribute("stacked") ? "<i></i><i></i>" : ""}
      ${this.hasAttribute("active") ? "<i></i><i></i>" : ""}
    `;
  }
}

class TaskBar extends HTMLElement {
  constructor() {
    super();
    this.attachShadow({ mode: "open" });
    this.shadowRoot.innerHTML = `
      <style>
        :host {
          flex: none;
          display: flex;
          box-sizing: border-box;
          height: 40px;
          border: 1px solid #55656b;
          border-left-width: 0;
          background: #63caec;
        }
        .pinned { display: flex; width: 113px; background: #70ceea; }
        .pinned button { flex: 1; display: grid; place-items: center; padding: 0; border: 0; background: none; }
        .pinned .start { flex: none; width: 50px; }
        .tasks { display: flex; gap: 1px; }
        .tray { display: flex; align-items: center; gap: 8px; margin-left: auto; padding-right: 20px; }
        .lang { padding: 0 9px 0 5px; font-size: 13px; }
        time { line-height: 18px; text-align: center; }
        .up { padding-right: 6px; }
      </style>
      <div class="pinned">
        <button class="start" aria-label="开始"><ui-icon name="start"></ui-icon></button>
        <button aria-label="服务器管理器"><ui-icon name="server"></ui-icon></button>
      </div>
      <div class="tasks"><slot></slot></div>
      <div class="tray">
        <ui-icon class="up" name="trayup"></ui-icon>
        <ui-icon name="flag"></ui-icon>
        <ui-icon name="wired"></ui-icon>
        <ui-icon name="muted"></ui-icon>
        <span class="lang">ENG</span>
        <time>14:34<br>2024/8/1</time>
      </div>
    `;
  }
}

customElements.define("ui-icon", UiIcon);
customElements.define("push-button", PushButton);
customElements.define("group-box", GroupBox);
customElements.define("desk-icon", DeskIcon);
customElements.define("app-window", AppWindow);
customElements.define("explorer-view", ExplorerView);
customElements.define("tab-pages", TabPages);
customElements.define("adapter-page", AdapterPage);
customElements.define("wins-page", WinsPage);
customElements.define("task-button", TaskButton);
customElements.define("task-bar", TaskBar);
customElements.define("desk-top", DeskTop);
</script>
</body>
</html>
